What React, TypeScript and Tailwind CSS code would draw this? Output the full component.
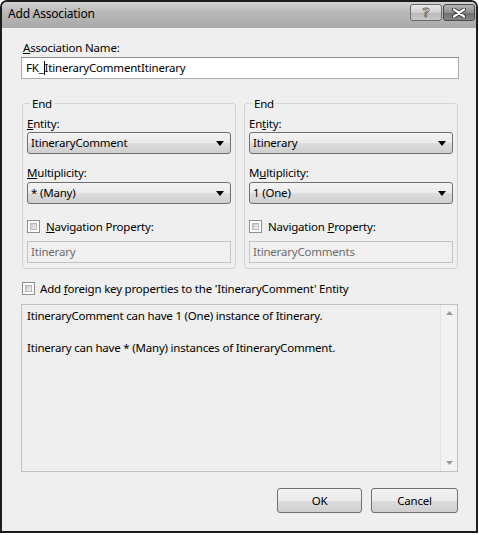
import React from "react";

const font = { fontFamily: '"Segoe UI", "Noto Sans", sans-serif', letterSpacing: "-0.2px" };

// gray dropdown like the Win7 combo box
const Combo = ({ value }: { value: string }) => (
  <div className="flex h-[22px] w-[204px] items-center justify-between rounded-[3px] border border-[#707070] bg-[linear-gradient(#f3f3f3_0%,#ebebeb_50%,#dddddd_51%,#cfcfcf_100%)] pl-[3px] pr-[6px]">
    <span>{value}</span>
    <svg width="8" height="5" viewBox="0 0 8 5">
      <path d="M0 0H8L4 5Z" fill="#000" />
    </svg>
  </div>
);

const CheckBox = () => (
  <div className="h-[13px] w-[13px] shrink-0 border border-[#8e8f8f] bg-white p-[2px]">
    <div className="h-full w-full bg-[linear-gradient(135deg,#c9c9c9,#f3f3f3)] border border-[#b6b6b6]" />
  </div>
);

const EndGroup = ({
  entity,
  mult,
  nav,
  side,
}: {
  entity: string;
  mult: string;
  nav: string;
  side: "left" | "right";
}) => (
  <fieldset className="w-[214px] rounded-[3px] border border-[#d5d5d5] px-[4px] pb-[5px]">
    <legend className="ml-[3px] px-[2px] leading-[15px]">End</legend>
    <div className="mt-[5px] leading-[15px]">
      {side === "left" ? (
        <>
          <u>E</u>ntity:
        </>
      ) : (
        <>
          En<u>t</u>ity:
        </>
      )}
    </div>
    <div className="mt-[1px]">
      <Combo value={entity} />
    </div>
    <div className="mt-[11px] leading-[15px]">
      {side === "left" ? (
        <>
          <u>M</u>ultiplicity:
        </>
      ) : (
        <>
          M<u>u</u>ltiplicity:
        </>
      )}
    </div>
    <div className="mt-[2px]">
      <Combo value={mult} />
    </div>
    <div className="mt-[16px] flex items-start gap-[6px] leading-[15px]">
      <CheckBox />
      <span className="-mt-[1px]">
        {side === "left" ? (
          <>
            <u>N</u>avigation Property:
          </>
        ) : (
          <>
            Navigation <u>P</u>roperty:
          </>
        )}
      </span>
    </div>
    <div className="mt-[7px] flex h-[22px] w-[204px] items-center border border-[#c4c4c4] bg-[#f0f0f0] pl-[3px] text-[#6d6d6d]">
      {nav}
    </div>
  </fieldset>
);

const App: React.FC = () => {
  return (
    <div className="h-[535px] w-[479px] overflow-hidden bg-white text-[11.5px] text-black" style={font}>
      <div className="flex h-[533px] w-[478px] flex-col overflow-hidden rounded-t-[7px] border-2 border-[#1d1d1d] bg-[#efefef]">
        {/* Title bar */}
        <div className="flex h-[26px] shrink-0 items-start justify-between bg-[linear-gradient(#d3d3d3,#b9b9b9_40%,#a9a9a9)] pl-[6px] pr-[1px]">
          <span className="mt-[4px] text-[12px] leading-[16px]">Add Association</span>
          <div className="mt-[2px] flex gap-[1px]">
            <div className="flex h-[17px] w-[32px] items-center justify-center rounded-[3px] border border-[#6a6a6a] bg-[linear-gradient(#e9e9e9,#cfcfcf_50%,#b8b8b8_51%,#c9c9c9)]">
              <span
                className="text-[13px] font-bold leading-[13px] text-white"
                style={{ WebkitTextStroke: "0.8px #555" }}
              >
                ?
              </span>
            </div>
            <div className="flex h-[17px] w-[32px] items-center justify-center rounded-[3px] border border-[#4a4a4a] bg-[linear-gradient(#b5b5b5,#8f8f8f_50%,#6e6e6e_51%,#858585)]">
              <svg width="14" height="10" viewBox="0 0 14 10">
                <path d="M2 1.5L12 8.5M12 1.5L2 8.5" stroke="#333" strokeWidth="4" strokeLinecap="round" />
                <path d="M2 1.5L12 8.5M12 1.5L2 8.5" stroke="#fff" strokeWidth="2.2" strokeLinecap="round" />
              </svg>
            </div>
          </div>
        </div>

        {/* Body */}
        <div className="flex flex-col pl-[19px] pr-[17px] pt-[12px]">
          <div className="ml-[2px] leading-[15px]">
            <u>A</u>ssociation Name:
          </div>
          <div className="mt-[2px] flex h-[22px] w-[438px] items-center border border-[#abadb3] border-t-[#8e8f8f] bg-white pl-[4px]">
            <span>FK_</span>
            <span className="h-[14px] border-l border-black" />
            <span>ItineraryCommentItinerary</span>
          </div>

          <div className="ml-[1px] mt-[17px] flex gap-[8px]">
            <EndGroup entity="ItineraryComment" mult="* (Many)" nav="Itinerary" side="left" />
            <EndGroup entity="Itinerary" mult="1 (One)" nav="ItineraryComments" side="right" />
          </div>

          <div className="ml-[1px] mt-[12px] flex items-start gap-[5px] leading-[15px]">
            <div className="mt-[1px]">
              <CheckBox />
            </div>
            <span>
              Add <u>f</u>oreign key properties to the 'ItineraryComment' Entity
            </span>
          </div>

          <div className="mt-[8px] flex h-[168px] w-[437px] border border-[#c2c2c2] bg-[#eeeeee]">
            <div className="flex-1 pl-[5px] pt-[3px] leading-[16px]">
              <div>ItineraryComment can have 1 (One) instance of Itinerary.</div>
              <div>&nbsp;</div>
              <div>Itinerary can have * (Many) instances of ItineraryComment.</div>
            </div>
            <div className="flex w-[17px] flex-col items-center justify-between border-l border-[#e4e4e4] bg-[#f2f2f2] py-[6px]">
              <svg width="7" height="4" viewBox="0 0 7 4">
                <path d="M0 4H7L3.5 0Z" fill="#9a9a9a" />
              </svg>
              <svg width="7" height="4" viewBox="0 0 7 4">
                <path d="M0 0H7L3.5 4Z" fill="#9a9a9a" />
              </svg>
            </div>
          </div>

          <div className="mt-[16px] flex justify-end gap-[9px] pr-[1px]">
            <button className="h-[25px] w-[85px] rounded-[3px] border border-[#707070] bg-[linear-gradient(#f3f3f3,#ebebeb_50%,#dddddd_51%,#cfcfcf)]">
              OK
            </button>
            <button className="h-[25px] w-[87px] rounded-[3px] border border-[#707070] bg-[linear-gradient(#f3f3f3,#ebebeb_50%,#dddddd_51%,#cfcfcf)]">
              Cancel
            </button>
          </div>
        </div>
      </div>
    </div>
  );
};

export default App;
